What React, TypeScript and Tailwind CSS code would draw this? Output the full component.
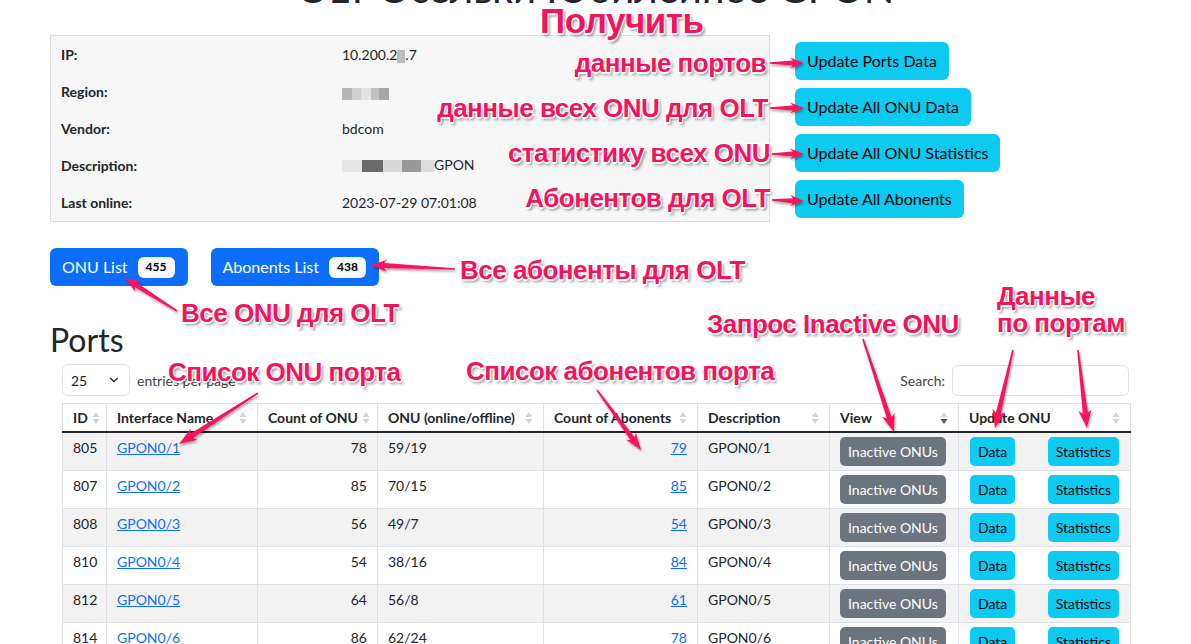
import { ChevronDown } from 'lucide-react';

const ROWS = [
  { id: 805, name: 'GPON0/1', count: 78, onu: '59/19', ab: 79 },
  { id: 807, name: 'GPON0/2', count: 85, onu: '70/15', ab: 85 },
  { id: 808, name: 'GPON0/3', count: 56, onu: '49/7', ab: 54 },
  { id: 810, name: 'GPON0/4', count: 54, onu: '38/16', ab: 84 },
  { id: 812, name: 'GPON0/5', count: 64, onu: '56/8', ab: 61 },
  { id: 814, name: 'GPON0/6', count: 86, onu: '62/24', ab: 78 },
];

const HEADERS = [
  'ID',
  'Interface Name',
  'Count of ONU',
  'ONU (online/offline)',
  'Count of Abonents',
  'Description',
  'View',
  'Update ONU',
];

// annotation text style: pink, white outline, soft shadow
const note =
  "absolute whitespace-nowrap font-['Liberation_Sans',Arial,sans-serif] font-bold leading-none tracking-[-0.5px] text-[#f7125c] [text-shadow:1px_1px_0_#fff,-1px_-1px_0_#fff,1px_-1px_0_#fff,-1px_1px_0_#fff,0_2px_0_#fff,2px_3px_3px_rgba(0,0,0,0.45)]";

function arrowPoints(x1: number, y1: number, x2: number, y2: number, head = 13, headW = 12, bodyW = 5) {
  const dx = x2 - x1;
  const dy = y2 - y1;
  const len = Math.hypot(dx, dy);
  const ux = dx / len;
  const uy = dy / len;
  const nx = -uy;
  const ny = ux;
  const bx = x2 - ux * head;
  const by = y2 - uy * head;
  const wx = bx - ux * 3;
  const wy = by - uy * 3;
  const pts = [
    [x1 + nx * 0.8, y1 + ny * 0.8],
    [bx + (nx * bodyW) / 2, by + (ny * bodyW) / 2],
    [wx + (nx * headW) / 2, wy + (ny * headW) / 2],
    [x2, y2],
    [wx - (nx * headW) / 2, wy - (ny * headW) / 2],
    [bx - (nx * bodyW) / 2, by - (ny * bodyW) / 2],
    [x1 - nx * 0.8, y1 - ny * 0.8],
  ];
  return pts.map(([x, y]) => `${x.toFixed(1)},${y.toFixed(1)}`).join(' ');
}

const ARROWS: [number, number, number, number, number?, number?][] = [
  [770, 63, 804, 63, 11, 11],
  [770, 108, 804, 108, 11, 11],
  [772, 154, 804, 154, 11, 11],
  [772, 200, 804, 201, 11, 11],
  [455, 269, 371, 265],
  [177, 311, 125, 278],
  [258, 393, 179, 444, 15, 13],
  [597, 390, 641, 450, 14, 12],
  [863, 339, 894, 432, 15, 13],
  [1013, 350, 995, 428, 15, 13],
  [1078, 350, 1087, 428, 15, 13],
];

function SortIcon({ active }: { active?: boolean }) {
  return (
    <svg width="8" height="14" viewBox="0 0 8 14" className="shrink-0">
      <path d="M4 1 L7.5 6 L0.5 6 Z" fill="#d4d4d4" />
      <path d="M4 13 L7.5 8 L0.5 8 Z" fill={active ? '#555' : '#d4d4d4'} />
    </svg>
  );
}

function Redact({ parts }: { parts: string[] }) {
  return (
    <span className="inline-flex h-[14px] items-end align-middle">
      {parts.map((c, i) => (
        <span key={i} className={c} />
      ))}
    </span>
  );
}

export default function App() {
  return (
    <div className="relative h-[644px] w-[1191px] overflow-hidden bg-white font-['Lato',sans-serif] text-[#212529]">
      <div className="px-[50px]">
        <h1 className="-mt-[36px] text-center text-[40px] leading-[1.2]">OLT Осельки Юбилейное GPON</h1>

        {/* OLT info + update buttons */}
        <div className="mt-[23px] flex items-start gap-[25px]">
          <div className="w-[720px] border border-[#dedede] bg-[#f7f7f7] text-[14px]">
            {[
              ['IP:', <span>10.200.2<span className="inline-block h-[13px] w-[8px] bg-[#bdbdbd] align-middle" />.7</span>],
              [
                'Region:',
                <Redact parts={['h-[12px] w-[10px] bg-[#b5b5b5]', 'h-[12px] w-[9px] bg-[#d0d0d0]', 'h-[12px] w-[10px] bg-[#e3e3e3]', 'h-[12px] w-[8px] bg-[#c2c2c2]', 'h-[12px] w-[10px] bg-[#a6a6a6]']} />,
              ],
              ['Vendor:', 'bdcom'],
              [
                'Description:',
                <span className="inline-flex items-center">
                  <Redact parts={['h-[12px] w-[20px] bg-[#e6e6e6]', 'h-[12px] w-[21px] bg-[#6a6a6a]', 'h-[12px] w-[19px] bg-[#d9d9d9]', 'h-[12px] w-[19px] bg-[#999999]', 'h-[12px] w-[13px] bg-[#dcdcdc]']} />
                  <span>GPON</span>
                </span>,
              ],
              ['Last online:', '2023-07-29 07:01:08'],
            ].map(([label, value], i) => (
              <div key={i} className="flex h-[37px] items-center">
                <div className="w-[281px] pl-[10px] font-bold">{label}</div>
                <div className="pl-[10px]">{value}</div>
              </div>
            ))}
          </div>
          <div className="mt-[7px] flex flex-col items-start gap-2">
            {['Update Ports Data', 'Update All ONU Data', 'Update All ONU Statistics', 'Update All Abonents'].map((t) => (
              <button key={t} className="h-[38px] rounded-md bg-[#0dcaf0] px-3 text-[16px] text-black">
                {t}
              </button>
            ))}
          </div>
        </div>

        {/* list buttons */}
        <div className="mt-[26px] flex gap-[23px]">
          {[
            ['ONU List', '455'],
            ['Abonents List', '438'],
          ].map(([t, n]) => (
            <button key={t} className="flex h-[38px] items-center gap-[10px] rounded-md bg-[#0d6efd] pl-3 pr-[13px] text-[16px] text-white">
              {t}
              <span className="flex h-[21px] items-center rounded-md bg-[#f8f9fa] px-[8px] text-[12px] font-bold text-black">{n}</span>
            </button>
          ))}
        </div>

        <h2 className="mt-[35px] text-[32px] leading-[1.2]">Ports</h2>

        {/* datatable */}
        <div className="mt-[5px] px-[12px]">
          <div className="flex h-[32px] items-center justify-between text-[14px]">
            <div className="flex items-center">
              <div className="flex h-[32px] w-[68px] items-center justify-between rounded-md border border-[#dee2e6] px-[8px]">
                <span>25</span>
                <ChevronDown size={14} strokeWidth={2} />
              </div>
              <span className="ml-[7px] text-[#444]">entries per page</span>
            </div>
            <div className="flex items-center">
              <span className="text-[#444]">Search:</span>
              <div className="ml-[7px] h-[31px] w-[177px] rounded-md border border-[#dee2e6]" />
            </div>
          </div>

          <table className="mt-[7px] w-[1068px] table-fixed border-collapse text-[14px] leading-[21px]">
            <colgroup>
              <col className="w-[44px]" />
              <col className="w-[151px]" />
              <col className="w-[120px]" />
              <col className="w-[166px]" />
              <col className="w-[154px]" />
              <col className="w-[132px]" />
              <col className="w-[129px]" />
              <col className="w-[172px]" />
            </colgroup>
            <thead>
              <tr className="border-b-2 border-[#212529]">
                {HEADERS.map((h) => (
                  <th key={h} className="border-x border-t border-[#dee2e6] px-[10px] py-[3px] text-left font-bold">
                    <div className="flex items-center justify-between gap-1">
                      <span className="whitespace-nowrap">{h}</span>
                      <SortIcon active={h === 'View'} />
                    </div>
                  </th>
                ))}
              </tr>
            </thead>
            <tbody>
              {ROWS.map((r, i) => (
                <tr key={r.id} className={i % 2 === 0 ? 'bg-[#f2f2f2]' : 'bg-white'}>
                  <td className="border border-[#dee2e6] px-[10px] py-1 align-top">{r.id}</td>
                  <td className="border border-[#dee2e6] px-[10px] py-1 align-top">
                    <a className="text-[#0d6efd] underline">{r.name}</a>
                  </td>
                  <td className="border border-[#dee2e6] px-[10px] py-1 text-right align-top">{r.count}</td>
                  <td className="border border-[#dee2e6] px-[10px] py-1 align-top">{r.onu}</td>
                  <td className="border border-[#dee2e6] px-[10px] py-1 text-right align-top">
                    <a className="text-[#0d6efd] underline">{r.ab}</a>
                  </td>
                  <td className="border border-[#dee2e6] px-[10px] py-1 align-top">{r.name}</td>
                  <td className="border border-[#dee2e6] px-[10px] py-1 align-top">
                    <button className="h-[29px] rounded-[5px] bg-[#6c757d] px-[8px] text-[14px] text-white">Inactive ONUs</button>
                  </td>
                  <td className="border border-[#dee2e6] px-[11px] py-1 align-top">
                    <div className="flex justify-between">
                      <button className="h-[29px] rounded-[5px] bg-[#0dcaf0] px-[8px] text-[14px] text-black">Data</button>
                      <button className="h-[29px] rounded-[5px] bg-[#0dcaf0] px-[8px] text-[14px] text-black">Statistics</button>
                    </div>
                  </td>
                </tr>
              ))}
            </tbody>
          </table>
        </div>
      </div>

      {/* annotations drawn over the page */}
      <svg className="pointer-events-none absolute inset-0" width="1191" height="644">
        <defs>
          <filter id="sh" x="-20%" y="-20%" width="140%" height="140%">
            <feDropShadow dx="1" dy="2" stdDeviation="1.2" floodColor="#000" floodOpacity="0.35" />
          </filter>
        </defs>
        {ARROWS.map(([x1, y1, x2, y2, h, w], i) => (
          <polygon key={i} points={arrowPoints(x1, y1, x2, y2, h ?? 13, w ?? 12)} fill="#f7125c" filter="url(#sh)" />
        ))}
      </svg>

      <div className={`${note} left-[540px] top-[3px] text-[35px]`}>Получить</div>
      <div className={`${note} right-[425px] top-[50px] text-[26px]`}>данные портов</div>
      <div className={`${note} right-[423px] top-[95px] text-[26px]`}>данные всех ONU для OLT</div>
      <div className={`${note} right-[421px] top-[140px] text-[26px]`}>статистику всех ONU</div>
      <div className={`${note} right-[421px] top-[185px] text-[26px]`}>Абонентов для OLT</div>
      <div className={`${note} left-[460px] top-[257px] text-[26px]`}>Все абоненты для OLT</div>
      <div className={`${note} left-[181px] top-[300px] text-[26px]`}>Все ONU для OLT</div>
      <div className={`${note} left-[168px] top-[359px] text-[26px]`}>Список ONU порта</div>
      <div className={`${note} left-[466px] top-[358px] text-[26px]`}>Список абонентов порта</div>
      <div className={`${note} left-[707px] top-[311px] text-[26px]`}>Запрос Inactive ONU</div>
      <div className={`${note} left-[997px] top-[283px] text-[26px]`}>Данные</div>
      <div className={`${note} left-[997px] top-[310px] text-[26px]`}>по портам</div>
    </div>
  );
}
